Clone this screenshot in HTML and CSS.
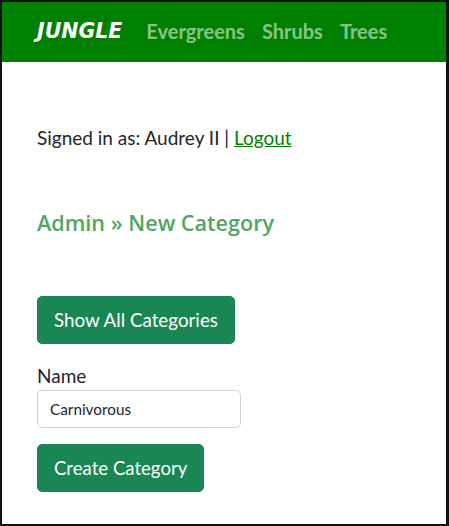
FILE: index.html
```html
<!DOCTYPE html>
<html lang="en">
<head>
<meta charset="utf-8">
<title>Jungle</title>
<link rel="stylesheet" href="styles.css">
</head>
<body>
<div class="frame">
  <nav class="navbar">
    <a class="brand" href="#">JUNGLE</a>
    <ul class="nav-links">
      <li><a href="#">Evergreens</a></li>
      <li><a href="#">Shrubs</a></li>
      <li><a href="#">Trees</a></li>
    </ul>
  </nav>
  <main class="content">
    <p class="signed">Signed in as: Audrey II | <a href="#" class="logout">Logout</a></p>
    <h1 class="page-title">Admin » New Category</h1>
    <a href="#" class="btn">Show All Categories</a>
    <form class="form">
      <label class="label" for="name">Name</label>
      <input class="input" id="name" type="text" value="Carnivorous">
      <button class="btn" type="button">Create Category</button>
    </form>
  </main>
</div>
</body>
</html>
```
FILE: styles.css
```css
* { box-sizing: border-box; }
html, body { margin: 0; padding: 0; background: #fff; }
body { width: 449px; height: 526px; font-family: "Lato", "Open Sans", sans-serif; color: #212529; }
.frame {
  width: 449px;
  height: 526px;
  border: 2px solid #111;
  border-right-width: 3px;
  overflow: hidden;
}
.navbar {
  height: 60px;
  background: #008000;
  display: flex;
  align-items: center;
  padding-left: 35px;
  padding-bottom: 3px;
}
.brand {
  color: #fff;
  font-family: "DejaVu Sans", sans-serif;
  font-weight: 700;
  font-style: italic;
  font-size: 20.5px;
  text-decoration: none;
  margin-right: 24px;
}
.nav-links {
  display: flex;
  gap: 17px;
  list-style: none;
  margin: 0;
  padding: 0;
}
.nav-links a {
  color: rgba(255,255,255,0.55);
  font-weight: 700;
  font-size: 20px;
  text-decoration: none;
}
.content {
  padding: 62px 35px 0;
}
.signed {
  margin: 0;
  font-size: 19px;
  line-height: 28px;
}
.logout { color: #008000; }
.page-title {
  margin: 57px 0 0;
  font-family: "Open Sans", sans-serif;
  font-size: 21.6px;
  font-weight: 600;
  color: #4fa661;
  line-height: 28px;
}
.btn {
  display: inline-block;
  margin-top: 59px;
  background: #198754;
  color: #fff;
  border: 1px solid #198754;
  border-radius: 5px;
  padding: 8px 16px;
  font-family: inherit;
  font-size: 18.8px;
  line-height: 30px;
  text-decoration: none;
}
.form { display: flex; flex-direction: column; align-items: flex-start; }
.label { margin-top: 20px; font-size: 19px; line-height: 24px; }
.input {
  margin-top: 2px;
  width: 204px;
  height: 38px;
  border: 1px solid #ced4da;
  border-radius: 5px;
  padding: 6px 12px;
  font-family: inherit;
  font-size: 15.3px;
  color: #212529;
}
.form .btn { margin-top: 16px; font-size: 18.6px; }
```
